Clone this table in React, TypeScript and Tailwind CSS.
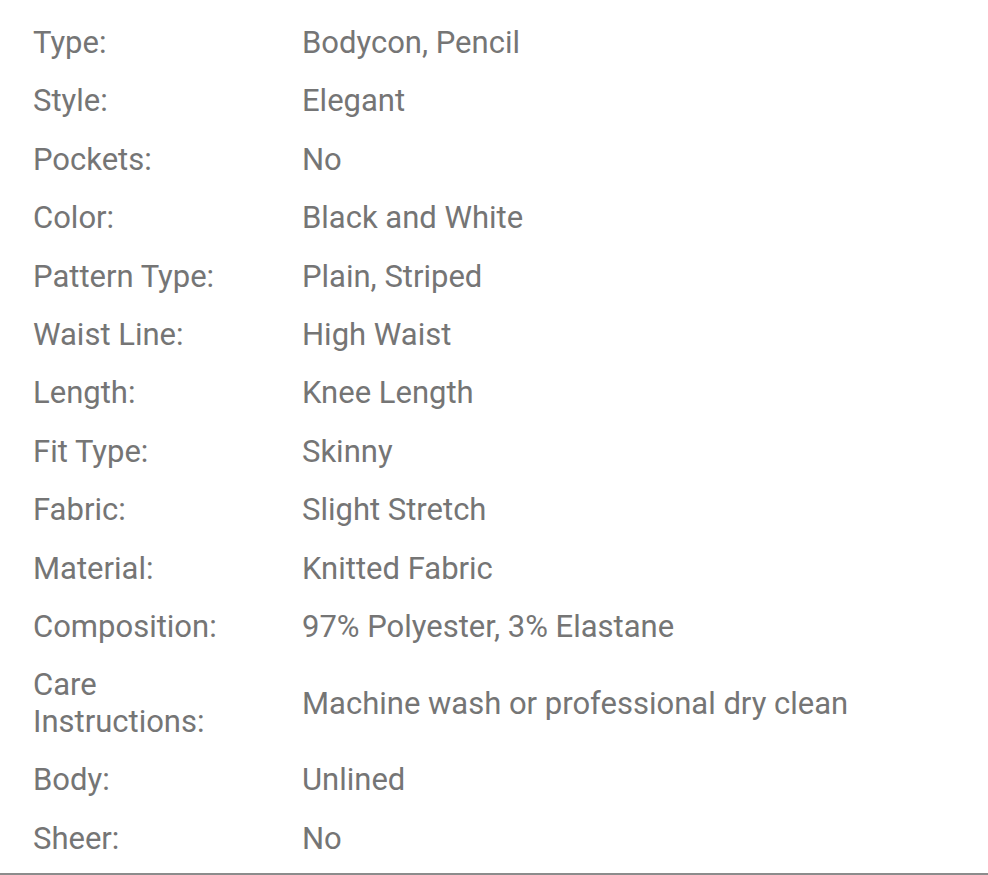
import React from 'react';

type Attr = { label: React.ReactNode; value: string };

const attrs: Attr[] = [
    { label: 'Type:', value: 'Bodycon, Pencil' },
    { label: 'Style:', value: 'Elegant' },
    { label: 'Pockets:', value: 'No' },
    { label: 'Color:', value: 'Black and White' },
    { label: 'Pattern Type:', value: 'Plain, Striped' },
    { label: 'Waist Line:', value: 'High Waist' },
    { label: 'Length:', value: 'Knee Length' },
    { label: 'Fit Type:', value: 'Skinny' },
    { label: 'Fabric:', value: 'Slight Stretch' },
    { label: 'Material:', value: 'Knitted Fabric' },
    { label: 'Composition:', value: '97% Polyester, 3% Elastane' },
    { label: <>Care<br />Instructions:</>, value: 'Machine wash or professional dry clean' },
    { label: 'Body:', value: 'Unlined' },
    { label: 'Sheer:', value: 'No' },
];

export default function App() {
    return (
        <div className="w-[988px] h-[875px] bg-white overflow-hidden font-['Roboto',sans-serif] text-[#757575]">
            <div className="border-b-2 border-[#8c8c8c] pt-[14px] pb-[5px] px-[33px]">
                {attrs.map((a, i) => (
                    <div key={i} className="flex items-center py-[11px] text-[31px] leading-[36.4px]">
                        <div className="w-[269px] shrink-0">{a.label}</div>
                        <div>{a.value}</div>
                    </div>
                ))}
            </div>
        </div>
    );
}
